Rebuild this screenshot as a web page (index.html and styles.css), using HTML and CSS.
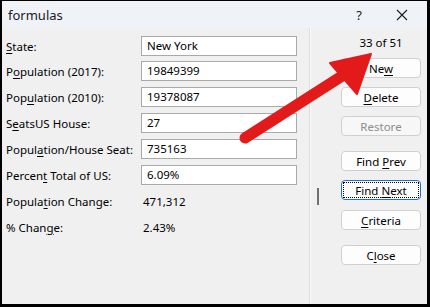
FILE: index.html
```html
<!DOCTYPE html>
<html>
<head>
<meta charset="utf-8">
<link rel="stylesheet" href="styles.css">
</head>
<body>
<div class="window">
  <div class="titlebar">
    <span class="title">formulas</span>
    <div class="title-controls">
      <span class="help">?</span>
      <svg class="close-x" width="12" height="12" viewBox="0 0 12 12"><path d="M1 1 L11 11 M11 1 L1 11" stroke="#1a1a1a" stroke-width="1.1" fill="none"/></svg>
    </div>
  </div>
  <div class="body">
    <div class="form">
      <div class="row first"><label><u>S</u>tate:</label><div class="field">New York</div></div>
      <div class="row"><label>P<u>o</u>pulation (2017):</label><div class="field">19849399</div></div>
      <div class="row"><label>Pop<u>u</u>lation (2010):</label><div class="field">19378087</div></div>
      <div class="row"><label>S<u>e</u>atsUS House:</label><div class="field">27</div></div>
      <div class="row"><label>Popul<u>a</u>tion/House Seat:</label><div class="field">735163</div></div>
      <div class="row"><label>Percen<u>t</u> Total of US:</label><div class="field">6.09%</div></div>
      <div class="row"><label>Popula<u>t</u>ion Change:</label><div class="value">471,312</div></div>
      <div class="row"><label>% Chan<u>g</u>e:</label><div class="value">2.43%</div></div>
    </div>
    <div class="divider"></div>
    <div class="side">
      <div class="grip-col"><div class="grip"></div></div>
      <div class="buttons">
        <div class="counter">33 of 51</div>
        <button class="btn"><span>Ne<u>w</u></span></button>
        <button class="btn"><span><u>D</u>elete</span></button>
        <button class="btn disabled"><span>Restore</span></button>
        <button class="btn gap"><span>Find <u>P</u>rev</span></button>
        <button class="btn focused"><span class="focus-ring"><span>Find <u>N</u>ext</span></span></button>
        <button class="btn"><span><u>C</u>riteria</span></button>
        <button class="btn gap"><span>C<u>l</u>ose</span></button>
      </div>
    </div>
  </div>
  <svg class="arrow" width="430" height="307" viewBox="0 0 430 307">
    <line x1="245" y1="138" x2="342" y2="76" stroke="#e21a1a" stroke-width="11" stroke-linecap="round"/>
    <polygon points="371,54 330,63 357,94" fill="#e21a1a" stroke="#e21a1a" stroke-width="2" stroke-linejoin="round"/>
  </svg>
</div>
</body>
</html>
```
FILE: styles.css
```css
* { box-sizing: border-box; }
html, body { margin: 0; padding: 0; }
body {
  width: 430px;
  height: 307px;
  overflow: hidden;
  font-family: "Noto Sans", "Open Sans", sans-serif;
  font-size: 11.5px;
  color: #000;
}
.window {
  position: relative;
  width: 430px;
  height: 307px;
  border-style: solid;
  border-color: #000;
  border-width: 1px 3px 3px 2px;
  background: #f0f0f0;
  display: flex;
  flex-direction: column;
}
.titlebar {
  height: 27px;
  background: #eff3f8;
  display: flex;
  align-items: center;
  justify-content: space-between;
  padding-left: 6px;
}
.title {
  font-size: 13px;
  color: #1a1a1a;
}
.title-controls {
  display: flex;
  align-items: center;
}
.help {
  font-size: 13px;
  color: #1a1a1a;
  margin-right: 34px;
}
.close-x {
  margin-right: 19px;
}
.body {
  flex: 1;
  display: flex;
}
.form {
  width: 307px;
  padding: 8px 0 0 4px;
}
.row {
  display: grid;
  grid-template-columns: 135px 156px;
  height: 20px;
  align-items: center;
  margin-bottom: 6px;
}
.row.first { margin-bottom: 5px; }
label { white-space: nowrap; }
.field {
  height: 20px;
  background: #fff;
  border: 1px solid #a9a9a9;
  padding: 0 5px;
  line-height: 18px;
  white-space: nowrap;
}
.value {
  padding-left: 2px;
}
.divider {
  width: 2px;
  border-left: 1px solid #dcdcdc;
  border-right: 1px solid #fbfbfb;
}
.side {
  flex: 1;
  display: flex;
}
.grip-col {
  width: 30px;
  padding: 160px 0 0 6px;
}
.grip {
  width: 2px;
  height: 17px;
  background: #707070;
}
.buttons {
  width: 80px;
  display: flex;
  flex-direction: column;
  padding-top: 7px;
}
.counter {
  text-align: center;
  height: 16px;
  line-height: 16px;
  margin-bottom: 7px;
}
.btn {
  font-family: inherit;
  font-size: 11.5px;
  color: #000;
  width: 80px;
  height: 20px;
  padding: 0;
  background: #fdfdfd;
  border: 1px solid #d0d0d0;
  border-radius: 4px;
  margin-bottom: 9px;
  display: flex;
  align-items: center;
  justify-content: center;
}
.btn.gap { margin-top: 6px; }
.btn.disabled {
  color: #8c8c8c;
  background: #f7f7f7;
}
.btn.focused {
  border: 1px solid #1e6fd0;
  padding: 1px;
  margin-bottom: 10px;
}
.focus-ring {
  display: flex;
  align-items: center;
  justify-content: center;
  width: 100%;
  height: 100%;
  border: 1px dotted #000;
}
u { text-decoration-thickness: 1px; text-underline-offset: 2px; }
.arrow {
  position: absolute;
  left: -2px;
  top: -1px;
  pointer-events: none;
}
```
